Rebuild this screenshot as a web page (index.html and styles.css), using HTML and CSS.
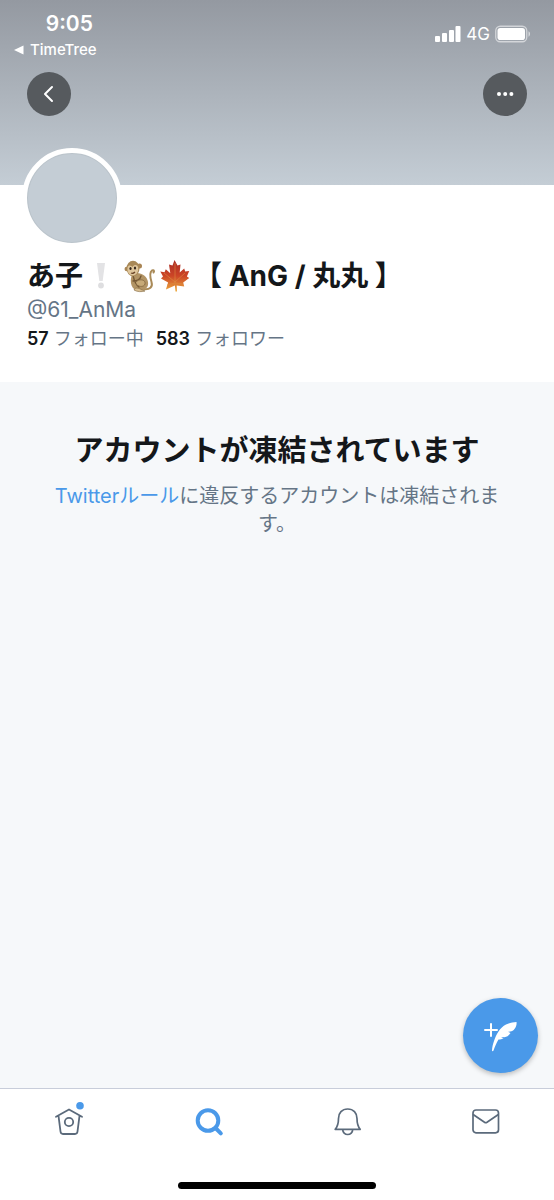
FILE: index.html
```
<!DOCTYPE html>
<html lang="ja">
<head>
<meta charset="utf-8">
<meta name="viewport" content="width=device-width, initial-scale=1">
<title>@61_AnMa</title>
<link rel="stylesheet" href="styles.css">
</head>
<body>
<div class="app">
  <header class="banner">
    <div class="status">
      <div class="status-left">
        <span class="clock">9:05</span>
        <a class="return" href="#"><svg width="10" height="10" viewBox="0 0 10 10" aria-hidden="true"><path d="M0 5 9.500.5v9z" fill="#fff"/></svg>TimeTree</a>
      </div>
      <div class="status-right">
        <svg width="26" height="16" viewBox="0 0 26 16" fill="#fff" aria-hidden="true"><rect x="0" y="10" width="5" height="6" rx="1"/><rect x="7" y="7" width="5" height="9" rx="1"/><rect x="14" y="4" width="5" height="12" rx="1"/><rect x="20.500" y="0" width="5" height="16" rx="1"/></svg>
        <span class="network">4G</span>
        <svg width="36" height="18" viewBox="0 0 36 18" aria-hidden="true"><rect x=".75" y="1.250" width="31" height="15.500" rx="4.500" fill="none" stroke="#fff" stroke-opacity=".55" stroke-width="1.300"/><rect x="2.500" y="3" width="27.500" height="12" rx="2.800" fill="#fff"/><path d="M33.500 6.300c2 .8 2 4.600 0 5.400z" fill="#fff" fill-opacity=".6"/></svg>
      </div>
    </div>
    <div class="actions">
      <button class="round" type="button" aria-label="戻る"><svg width="44" height="44" viewBox="0 0 44 44" fill="none" stroke="#fff" stroke-width="2" stroke-linecap="round" stroke-linejoin="round"><path d="M25 15 18 22l7 7"/></svg></button>
      <button class="round" type="button" aria-label="その他"><svg width="44" height="44" viewBox="0 0 44 44" fill="#fff"><circle cx="16" cy="22" r="2"/><circle cx="22.200" cy="22" r="2"/><circle cx="28.400" cy="22" r="2"/></svg></button>
    </div>
  </header>

  <section class="profile">
    <div class="avatar"></div>
    <h1 class="name">
      <span>あ子</span>
      <svg class="mark" width="10" height="28" viewBox="0 0 10 28" role="img" aria-label="感嘆符"><path d="M1 1h8L6.700 19H3.300z" fill="#e3e3e5"/><circle cx="5" cy="23.500" r="2.900" fill="#dedee0"/></svg>
      <svg class="monkey" width="32" height="34" viewBox="0 0 32 34" role="img" aria-label="サル">
        <path d="M19 30c7 1 10-2 8.500-7-1.500-5-1.500-10 .5-11.500 2-1 2.500 1 1.500 2" fill="none" stroke="#a98a58" stroke-width="2" stroke-linecap="round"/>
        <path d="M8 15c7-3 15 1 16 8 1 6-4 9-10 8.500C8 31 5 24 8 15z" fill="#b29465"/>
        <path d="M9 16c1 4 1 8 6 12M17 17c-1 4-4 5-8 5" fill="none" stroke="#745733" stroke-width="1.300" stroke-linecap="round"/>
        <path d="M12 23c4-4 10-2 9 2-1 3-5 3-8 1" fill="#c7aa78" stroke="#80643d" stroke-width=".8"/>
        <path d="M10 31c1-3 5-2 8 0l3 1c-3 1-8 1-11-1z" fill="#d9bf92" stroke="#80643d" stroke-width=".6"/>
        <circle cx="2.800" cy="10" r="2.300" fill="#a98555"/><circle cx="15.500" cy="7" r="2.500" fill="#a98555"/>
        <ellipse cx="9" cy="9.500" rx="6.500" ry="7.800" fill="#a88857"/>
        <path d="M3.500 9c1-4 4-2 5-1 2-3 5-2 5.500 0 1 4-1 8-5 8.500-4 0-6-4-5.500-7.500z" fill="#dfc69c"/>
        <ellipse cx="6.500" cy="9.500" rx="1.100" ry="1.500" fill="#33261b"/><ellipse cx="11" cy="9" rx="1.100" ry="1.500" fill="#33261b"/><path d="M7 14q2 1 4-1" fill="none" stroke="#684326" stroke-width="1.200"/>
      </svg>
      <svg class="leaf" width="30" height="32" viewBox="0 0 30 32" role="img" aria-label="もみじ">
        <defs><linearGradient id="autumn" x1="0" y1="0" x2="0" y2="1"><stop offset="0" stop-color="#a92b25"/><stop offset=".5" stop-color="#cc4526"/><stop offset="1" stop-color="#edaa3d"/></linearGradient></defs>
        <path d="m14.500 0 3 5.500 3-1-.8 8 4.500-4 1 3 4-.5-2.300 5.500 2.300 1.500-6 4.500 1 4-7.500-1 .3 6h-1.500l-.6-6-9 4 2.200-7L1 18.500l2-2-2.700-5 4.200.8 1.300-3 4.500 4L9 4.500l3.500 1z" fill="url(#autumn)"/>
        <path d="M15 3v22M15 22 4 13m11 9 10-9M15 23l-8 2m8-2 8 1" stroke="#dc8c42" stroke-width=".6" fill="none"/>
      </svg>
      <span>【 AnG / 丸丸 】</span>
    </h1>
    <p class="handle">@61_AnMa</p>
    <div class="counts">
      <a href="#"><b>57</b> フォロー中</a>
      <a href="#"><b>583</b> フォロワー</a>
    </div>
  </section>

  <main class="notice">
    <h2>アカウントが凍結されています</h2>
    <p><a href="#">Twitterルール</a>に違反するアカウントは凍結されます。</p>
    <button class="compose" type="button" aria-label="ツイートする"><svg width="75" height="75" viewBox="0 0 75 75"><path d="M22 32h12M28 26v12" stroke="#fff" stroke-width="2" fill="none" stroke-linecap="round"/><path d="M29 52.500c.2-3.500 1-6.500 2-9.500 1.200-3.500 2.500-6.500 4.500-9.500 2-3 4.500-5.500 7.500-7 3.500-1.700 7-2.300 10.500-2.500.3 2-.2 4-1 5.500-1 2-2.500 3.300-4 3.800-1 .4-2.500.5-3.500.4l2.500 1.300c-1.500 2.500-3.500 4-6 4.200l-3.500-.2 2.500 1.300c-1.500.8-3 1.200-5 1.200-2 3-3.500 7-5 11-.4.900-1.500.900-1.500 0z" fill="#fff"/></svg></button>
  </main>

  <footer class="bottom">
    <nav class="tabs">
      <a href="#" aria-label="ホーム"><svg width="34" height="38" viewBox="0 0 34 38" fill="none" stroke="#5b6a7b" stroke-width="1.800" stroke-linecap="round" stroke-linejoin="round"><path d="M4 14.800 17 7.500l13 7.300M6.500 13.800l2 15.700q.3 2.500 2.500 2.500h12q2.200 0 2.500-2.500l2-15.700"/><circle cx="17" cy="20" r="4.200"/><circle cx="28" cy="3.800" r="3.800" fill="#4a99e9" stroke="none"/></svg></a>
      <a href="#" aria-label="検索"><svg width="34" height="38" viewBox="0 0 34 38" fill="none" stroke="#4a99e9" stroke-width="4" stroke-linecap="round"><circle cx="17" cy="18.500" r="10.300"/><path d="m25 26.500 4.800 4.800"/></svg></a>
      <a href="#" aria-label="通知"><svg width="34" height="38" viewBox="0 0 34 38" fill="none" stroke="#5b6a7b" stroke-width="1.700" stroke-linecap="round" stroke-linejoin="round"><path d="M9.500 16.500C9.500 11 13 7 18.700 7s9.300 4 9.300 9.500c0 5 .8 8 3.200 10.800h-25C8.700 24.500 9.500 21.500 9.500 16.500zM13.700 27.500a5 5 0 0 0 10 0"/></svg></a>
      <a href="#" aria-label="メッセージ"><svg width="34" height="38" viewBox="0 0 34 38" fill="none" stroke="#5b6a7b" stroke-width="1.700" stroke-linecap="round" stroke-linejoin="round"><rect x="5" y="8" width="25.500" height="22.800" rx="3"/><path d="m5.500 12.700 11 7.500q1.250.8 2.500 0l11-7.500"/></svg></a>
    </nav>
    <div class="indicator"></div>
  </footer>
</div>
</body>
</html>
```
FILE: styles.css
```
* { box-sizing: border-box; }

body {
  margin: 0;
  background: #fff;
  color: #14171a;
  font-family: Inter, "Noto Sans CJK JP", sans-serif;
}

h1, h2, p { margin: 0; }
a { color: inherit; text-decoration: none; }
button { border: 0; padding: 0; cursor: pointer; }
svg { display: block; flex: none; }

.app {
  display: flex;
  flex-direction: column;
  min-height: 100vh;
}

.banner {
  padding: 12px 27px 69px;
  background: linear-gradient(#9499a1, #c4cdd5);
}

.status {
  display: flex;
  justify-content: space-between;
  height: 60px;
  margin: 0 -4px 0 -13px;
  color: #fff;
}

.status-left {
  display: flex;
  flex-direction: column;
  align-items: center;
}

.clock {
  padding-left: 28px;
  font-size: 21px;
  line-height: 24px;
  font-weight: 600;
}

.return {
  display: flex;
  align-items: center;
  gap: 6px;
  font-size: 15px;
  line-height: 28px;
  font-weight: 500;
}

.status-right {
  display: flex;
  align-items: center;
  gap: 5px;
  height: 43px;
}

.network { font-size: 17px; }

.actions {
  display: flex;
  justify-content: space-between;
}

.round {
  width: 44px;
  height: 44px;
  border-radius: 50%;
  background: #565a5e;
}

.profile {
  padding: 0 27px 29px;
  background: #fff;
}

.avatar {
  width: 100px;
  height: 100px;
  margin: -37px 0 0 -5px;
  border: 5px solid #fff;
  border-radius: 50%;
  background: #c4cdd5;
  box-shadow: inset 0 0 0 1px #bbc4cb;
}

.name {
  display: flex;
  align-items: center;
  margin-top: 8px;
  font-size: 28px;
  line-height: 40px;
  white-space: nowrap;
}

.mark { margin: 0 18px 0 13px; }
.leaf { margin: 0 4px; }

.handle {
  color: #657586;
  font-size: 21px;
  line-height: 27px;
}

.counts {
  display: flex;
  gap: 12px;
  margin-top: 2px;
  color: #657586;
  font-size: 18px;
  line-height: 28px;
}

.counts b {
  color: #14171a;
  font-weight: 600;
}

.notice {
  position: relative;
  flex: 1;
  padding: 48px;
  background: #f6f8fa;
  text-align: center;
}

.notice h2 {
  font-size: 29px;
  line-height: 42px;
}

.notice p {
  margin-top: 10px;
  color: #657586;
  font-size: 20px;
  line-height: 28px;
}

.notice p a {
  color: #4a99e9;
}

.compose {
  position: absolute;
  right: 16px;
  bottom: 15px;
  width: 75px;
  height: 75px;
  border-radius: 50%;
  background: #4a99e9;
  box-shadow: 0 2px 5px rgba(0, 0, 0, .25);
}

.bottom {
  padding: 13px 0 11px;
  border-top: 1px solid #c8cdda;
  background: #fff;
}

.tabs { display: flex; }

.tabs a {
  display: flex;
  flex: 1;
  justify-content: center;
}

.indicator {
  width: 198px;
  height: 7px;
  margin: 42px auto 0;
  border-radius: 4px;
  background: #000;
}
```
